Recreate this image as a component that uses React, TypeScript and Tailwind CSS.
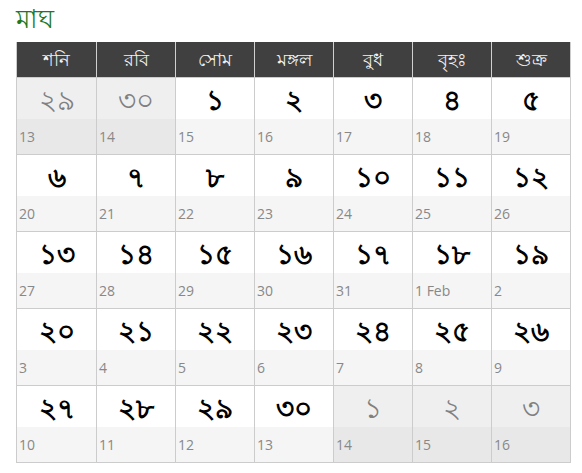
import React from "react";

type Cell = { bn: string; en: string; other?: boolean };

const headers = ["শনি", "রবি", "সোম", "মঙ্গল", "বুধ", "বৃহঃ", "শুক্র"];

const weeks: Cell[][] = [
  [
    { bn: "২৯", en: "13", other: true },
    { bn: "৩০", en: "14", other: true },
    { bn: "১", en: "15" },
    { bn: "২", en: "16" },
    { bn: "৩", en: "17" },
    { bn: "৪", en: "18" },
    { bn: "৫", en: "19" },
  ],
  [
    { bn: "৬", en: "20" },
    { bn: "৭", en: "21" },
    { bn: "৮", en: "22" },
    { bn: "৯", en: "23" },
    { bn: "১০", en: "24" },
    { bn: "১১", en: "25" },
    { bn: "১২", en: "26" },
  ],
  [
    { bn: "১৩", en: "27" },
    { bn: "১৪", en: "28" },
    { bn: "১৫", en: "29" },
    { bn: "১৬", en: "30" },
    { bn: "১৭", en: "31" },
    { bn: "১৮", en: "1 Feb" },
    { bn: "১৯", en: "2" },
  ],
  [
    { bn: "২০", en: "3" },
    { bn: "২১", en: "4" },
    { bn: "২২", en: "5" },
    { bn: "২৩", en: "6" },
    { bn: "২৪", en: "7" },
    { bn: "২৫", en: "8" },
    { bn: "২৬", en: "9" },
  ],
  [
    { bn: "২৭", en: "10" },
    { bn: "২৮", en: "11" },
    { bn: "২৯", en: "12" },
    { bn: "৩০", en: "13" },
    { bn: "১", en: "14", other: true },
    { bn: "২", en: "15", other: true },
    { bn: "৩", en: "16", other: true },
  ],
];

export default function App() {
  return (
    <div className="w-[582px] h-[473px] bg-white pl-[16px] pt-[2px]" style={{ fontFamily: '"Noto Sans", "Open Sans", sans-serif' }}>
      <div className="h-[40px] text-[26px] leading-[32px] text-[#1d7a1d]">মাঘ</div>
      <div className="w-[555px] grid grid-cols-7 border-l border-r border-b border-[#cccccc]">
        {headers.map((h, i) => (
          <div
            key={h}
            className={`h-[35px] bg-[#404040] text-[#f2f2f2] text-[18px] flex items-center justify-center ${i > 0 ? "border-l border-[#d0d0d0]" : ""}`}
          >
            {h}
          </div>
        ))}
        {weeks.map((w, wi) =>
          w.map((c, ci) => (
            <div
              key={`${wi}-${ci}`}
              className={`border-t border-[#cccccc] flex flex-col ${ci > 0 ? "border-l" : ""}`}
            >
              <div
                className={`h-[41px] flex items-center justify-center text-[28px] leading-none ${
                  c.other ? "bg-[#efefef] text-[#808080] font-light" : "bg-white text-black font-bold"
                }`}
              >
                {c.bn}
              </div>
              <div
                className={`h-[35px] flex items-center pl-[2px] text-[14px] text-[#888888] ${
                  c.other ? "bg-[#e8e8e8]" : "bg-[#f5f5f5]"
                }`}
                style={{ fontFamily: '"Open Sans", sans-serif' }}
              >
                {c.en}
              </div>
            </div>
          ))
        )}
      </div>
    </div>
  );
}
